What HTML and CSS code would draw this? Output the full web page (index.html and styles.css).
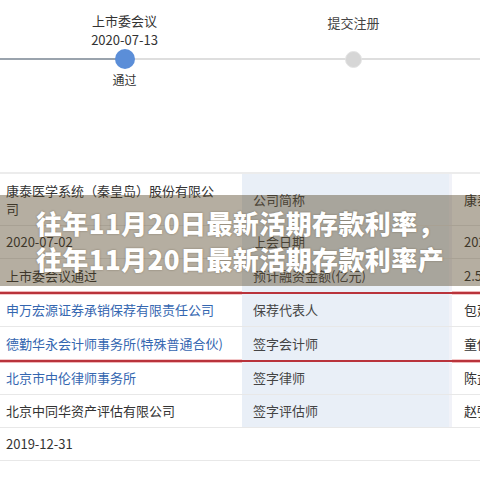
FILE: index.html
```html
<!DOCTYPE html>
<html lang="zh-CN">
<head>
<meta charset="utf-8">
<title>往年11月20日最新活期存款利率</title>
<link rel="stylesheet" href="styles.css">
</head>
<body>
<div class="timeline">
  <div class="track"></div>
  <div class="steps">
    <div class="step done">
      <div class="t-label">上市委会议<br>2020-07-13</div>
      <div class="dot-row"><span class="dot"></span></div>
      <div class="status">通过</div>
    </div>
    <div class="step">
      <div class="t-label t-single">提交注册</div>
      <div class="dot-row"><span class="dot"></span></div>
      <div class="status"></div>
    </div>
  </div>
</div>

<div class="table-wrap">
  <div class="row tall">
    <div class="c1">康泰医学系统（秦皇岛）股份有限公司</div>
    <div class="c2">公司简称</div>
    <div class="c3">康泰医学</div>
  </div>
  <div class="row">
    <div class="c1">2020-07-02</div>
    <div class="c2">上会日期</div>
    <div class="c3">2020-07-13</div>
  </div>
  <div class="row last-before">
    <div class="c1">上市委会议通过</div>
    <div class="c2">预计融资金额(亿元)</div>
    <div class="c3">2.58</div>
  </div>
  <div class="group">
    <div class="row">
      <div class="c1 link">申万宏源证券承销保荐有限责任公司</div>
      <div class="c2">保荐代表人</div>
      <div class="c3">包建祥</div>
    </div>
    <div class="row no-border">
      <div class="c1 link">德勤华永会计师事务所(特殊普通合伙)</div>
      <div class="c2">签字会计师</div>
      <div class="c3">童传江</div>
    </div>
  </div>
  <div class="row">
    <div class="c1 link">北京市中伦律师事务所</div>
    <div class="c2">签字律师</div>
    <div class="c3">陈益文</div>
  </div>
  <div class="row">
    <div class="c1">北京中同华资产评估有限公司</div>
    <div class="c2">签字评估师</div>
    <div class="c3">赵强</div>
  </div>
  <div class="row">
    <div class="c1">2019-12-31</div>
    <div class="c2 empty"></div>
    <div class="c3"></div>
  </div>

  <div class="overlay">
    <div class="overlay-title">往年11月20日最新活期存款利率，<br>往年11月20日最新活期存款利率产</div>
  </div>
</div>
</body>
</html>
```

FILE: styles.css
```css
* { box-sizing: border-box; }

html, body {
  margin: 0;
  padding: 0;
  background: #ffffff;
}

body {
  width: 480px;
  height: 480px;
  overflow: hidden;
  font-family: "Noto Sans CJK SC", "Microsoft YaHei", sans-serif;
  color: #333333;
  font-size: 13px;
}

/* ---------- timeline ---------- */
.timeline {
  position: relative;
  height: 100px;
  padding-top: 11px;
}

.track {
  position: absolute;
  left: 0;
  right: 0;
  top: 58px;
  height: 2px;
  background: linear-gradient(to right, #9aa3ad 0, #9aa3ad 116px, #dedede 116px, #dedede 100%);
}

.steps {
  position: relative;
  display: flex;
  margin-left: 10px;
}

.step {
  width: 229px;
  display: flex;
  flex-direction: column;
  align-items: center;
}

.t-label {
  height: 38px;
  font-size: 13px;
  line-height: 19px;
  text-align: center;
  color: #333333;
}

.t-single {
  padding-top: 2px;
  color: #444444;
}

.dot-row {
  height: 20px;
  display: flex;
  align-items: center;
  justify-content: center;
}

.dot {
  display: block;
  width: 17px;
  height: 17px;
  border-radius: 50%;
  background: #d6d6d6;
  border: 1px solid #e4e4e4;
}

.step.done .dot {
  width: 20px;
  height: 20px;
  background: #5b8ed8;
  border: none;
}

.status {
  margin-top: 3px;
  font-size: 12px;
  line-height: 16px;
  color: #333333;
}

/* ---------- table ---------- */
.table-wrap {
  position: relative;
  margin-top: 72px;
  border-top: 2px solid #ececec;
}

.row {
  display: grid;
  grid-template-columns: 242px 210px 1fr;
  height: 33px;
  border-bottom: 1px solid #e8e8e8;
}

.row.tall {
  height: 52px;
}

.row.last-before,
.row.no-border {
  border-bottom: none;
}

.c1, .c2, .c3 {
  display: flex;
  align-items: center;
  line-height: 18px;
  white-space: nowrap;
  overflow: hidden;
}

.c1 {
  padding: 0 17px 0 6px;
  white-space: normal;
  color: #333333;
}

.c1.link {
  color: #3466b0;
  white-space: nowrap;
}

.c2 {
  padding-left: 11px;
  background: #e9eff7;
  border-right: 3px solid #f1f2f8;
  color: #444444;
}

.c2.empty {
  background: #ffffff;
  border-right: none;
}

.c3 {
  padding-left: 12px;
  color: #333333;
}

.group {
  border-top: 2px solid #b9333b;
  border-bottom: 2px solid #b9333b;
  box-shadow: 0 -1px 0 #f0b6b8, 0 1px 0 #f0b6b8, inset 0 1px 0 #f3c9ca, inset 0 -1px 0 #f3c9ca;
}

/* ---------- overlay title ---------- */
.overlay {
  position: absolute;
  left: 0;
  right: 0;
  top: 21px;
  height: 91px;
  background: rgba(78, 62, 32, 0.42);
  display: flex;
  align-items: center;
  justify-content: center;
}

.overlay-title {
  color: #ffffff;
  font-size: 26px;
  font-weight: 900;
  line-height: 36px;
  letter-spacing: 0.4px;
  text-align: center;
  white-space: nowrap;
  text-shadow: 0 0 2px rgba(60, 45, 20, 0.45);
}
```
